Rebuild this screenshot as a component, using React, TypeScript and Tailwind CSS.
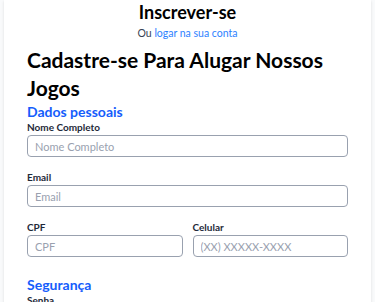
import React from 'react';

const font = { fontFamily: 'Lato, "Liberation Sans", sans-serif' };

const Field = ({ label, placeholder }: { label: string; placeholder: string }) => (
  <div className="flex flex-col">
    <label className="mb-[2px] text-[10px] font-bold leading-[12px] text-gray-800">{label}</label>
    <input
      placeholder={placeholder}
      className="h-[22px] w-full rounded-[4px] border border-gray-400 bg-white px-[7px] text-[11px] text-gray-800 placeholder:text-gray-400 outline-none"
    />
  </div>
);

const App = () => {
  return (
    <div className="min-h-screen bg-gray-50" style={font}>
      <div className="mx-[4px] min-h-[302px] bg-white px-[23px] shadow-sm">
        <div className="flex flex-col items-center">
          <h2 className="text-[18px] font-bold leading-[24px] text-black">Inscrever-se</h2>
          <p className="mt-[2px] text-[10.5px] leading-[14px] text-gray-700">
            Ou <a className="text-blue-500" href="#">logar na sua conta</a>
          </p>
        </div>

        <h1 className="mt-[6px] text-[21px] font-bold leading-[28px] text-black">
          Cadastre-se Para Alugar Nossos Jogos
        </h1>

        <h3 className="mt-[1px] text-[14px] font-bold leading-[18px] text-blue-600">Dados pessoais</h3>
        <div className="flex flex-col gap-[14px]">
          <Field label="Nome Completo" placeholder="Nome Completo" />
          <Field label="Email" placeholder="Email" />
          <div className="grid grid-cols-2 gap-[10px]">
            <Field label="CPF" placeholder="CPF" />
            <Field label="Celular" placeholder="(XX) XXXXX-XXXX" />
          </div>
        </div>

        <h3 className="mt-[19px] text-[14px] font-bold leading-[18px] text-blue-600">Segurança</h3>
        <label className="block text-[10px] font-bold leading-[12px] text-gray-800">Senha</label>
      </div>
    </div>
  );
};

export default App;
